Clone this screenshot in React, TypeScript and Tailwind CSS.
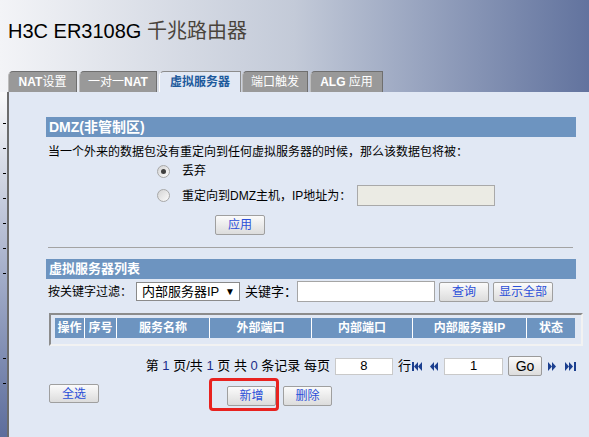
import React from "react";

const btn =
  "flex items-center justify-center border border-[#9f9f9f] bg-gradient-to-b from-[#fbfbfb] to-[#dcdcdc] text-[12px] text-[#2b4fd8] rounded-[2px]";

function Radio({ checked }: { checked?: boolean }) {
  return (
    <span className="w-[13px] h-[13px] rounded-full border border-[#a8a8a8] bg-gradient-to-br from-[#d4d4d4] to-[#fbfbfb] flex items-center justify-center shrink-0">
      {checked && <span className="w-[5px] h-[5px] rounded-full bg-[#3f3f3f]" />}
    </span>
  );
}

function Tab({ w, ml, active, children }: { w: string; ml: string; active?: boolean; children: React.ReactNode }) {
  return (
    <div
      className={
        `${w} ${ml} h-[21px] shrink-0 flex items-center justify-center rounded-tl-[5px] border-t border-r text-[12px] ` +
        (active
          ? "bg-[#e1e8f4] border-[#8c8c8c] border-l border-l-white text-[#1d5a9c] font-bold"
          : "bg-[#999999] border-[#6f6f6f] border-l border-l-[#bdbdbd] text-white")
      }
    >
      {children}
    </div>
  );
}

const tri = "#1b3f8f";

function IconFirst() {
  return (
    <svg width="10" height="9" viewBox="0 0 10 9">
      <rect x="0" y="0" width="2" height="9" fill={tri} />
      <polygon points="6,0 2,4.5 6,9" fill={tri} />
      <polygon points="10,0 6,4.5 10,9" fill={tri} />
    </svg>
  );
}
function IconPrev() {
  return (
    <svg width="8" height="9" viewBox="0 0 8 9">
      <polygon points="4,0 0,4.5 4,9" fill={tri} />
      <polygon points="8,0 4,4.5 8,9" fill={tri} />
    </svg>
  );
}
function IconNext() {
  return (
    <svg width="8" height="9" viewBox="0 0 8 9">
      <polygon points="0,0 4,4.5 0,9" fill={tri} />
      <polygon points="4,0 8,4.5 4,9" fill={tri} />
    </svg>
  );
}
function IconLast() {
  return (
    <svg width="11" height="9" viewBox="0 0 11 9">
      <polygon points="0,0 4,4.5 0,9" fill={tri} />
      <polygon points="4,0 8,4.5 4,9" fill={tri} />
      <rect x="9" y="0" width="2" height="9" fill={tri} />
    </svg>
  );
}

export default function App() {
  const cols: [string, string][] = [
    ["操作", "w-[30px]"],
    ["序号", "w-[32px]"],
    ["服务名称", "w-[93px]"],
    ["外部端口", "w-[102px]"],
    ["内部端口", "w-[101px]"],
    ["内部服务器IP", "w-[114px]"],
    ["状态", "w-[48px]"],
  ];
  const num = "text-[#1c2d8a]";
  return (
    <div className="w-[589px] h-[437px] overflow-hidden flex flex-col font-['Liberation_Sans','Noto_Sans_CJK_SC',sans-serif] text-[12px] text-black">
      {/* header */}
      <div className="h-[92px] shrink-0 flex flex-col bg-gradient-to-r from-[#f3f4f7] via-[#c3cad8] to-[#62739e]">
        <div className="mt-[19px] h-[24px] leading-[24px] pl-[8px] text-[20px]">
          <span className="text-black">H3C ER3108G </span>
          <span className="text-[#4a443c]">千兆路由器</span>
        </div>
        <div className="mt-auto flex items-end pl-[8px]">
          <Tab w="w-[69px]" ml="ml-0">
            <span className="font-bold">NAT</span>设置
          </Tab>
          <Tab w="w-[78px]" ml="ml-[2px]">
            一对一<span className="font-bold">NAT</span>
          </Tab>
          <Tab w="w-[82px]" ml="ml-[2px]" active>
            虚拟服务器
          </Tab>
          <Tab w="w-[66px]" ml="ml-[1px]">
            端口触发
          </Tab>
          <Tab w="w-[73px]" ml="ml-[2px]">
            <span className="font-bold">ALG</span>&nbsp;应用
          </Tab>
        </div>
      </div>

      {/* body */}
      <div className="flex-1 flex min-h-0">
        <div className="w-[7px] shrink-0 bg-gradient-to-b from-[#fafafa] to-[#5d6d9c] flex flex-col pt-[31px] gap-[24px]">
          {[0, 1, 2, 3, 4, 5, 6].map((i) => (
            <div key={i} className="ml-[3px] w-[3px] h-[1px] bg-black" />
          ))}
          <div className="ml-[3px] w-[3px] h-[1px] bg-black mt-[60px]" />
          <div className="ml-[3px] w-[3px] h-[1px] bg-black" />
        </div>
        <div className="w-[2px] shrink-0 bg-[#6c6c6c]" />
        <div className="flex-1 min-w-0 bg-[#e1e8f4] pl-[37px] pr-[13px] flex flex-col">
          {/* DMZ */}
          <div className="mt-[25px] h-[20px] leading-[20px] bg-[#6d94c0] pl-[3px] text-white font-bold text-[14px]">
            DMZ(非管制区)
          </div>
          <div className="mt-[6px] h-[18px] leading-[18px] pl-[2px] whitespace-nowrap">
            当一个外来的数据包没有重定向到任何虚拟服务器的时候，那么该数据包将被：
          </div>
          <div className="h-[20px] flex items-center pl-[111px]">
            <Radio checked />
            <span className="ml-[12px]">丢弃</span>
          </div>
          <div className="mt-[3px] h-[23px] flex items-center pl-[111px]">
            <Radio />
            <span className="ml-[12px] whitespace-nowrap">重定向到DMZ主机，IP地址为：</span>
            <div className="ml-[6px] w-[138px] h-[21px] shrink-0 bg-[#ebebe4] border border-[#a9a9a9]" />
          </div>
          <div className={`mt-[8px] ml-[169px] w-[50px] h-[20px] ${btn}`}>应用</div>
          <div className="mt-[12px] ml-[2px] mr-[3px] h-[1px] bg-[#a3a3a3]" />

          {/* list */}
          <div className="mt-[11px] h-[20px] leading-[20px] bg-[#6d94c0] pl-[3px] text-white font-bold text-[13px]">
            虚拟服务器列表
          </div>
          <div className="mt-[2px] h-[21px] flex items-center pl-[2px] whitespace-nowrap">
            <span className="w-[88px] shrink-0">按关键字过滤：</span>
            <div className="w-[104px] h-[19px] shrink-0 bg-white border border-[#8a8a8a] flex items-center pl-[5px] pr-[4px] text-[13px]">
              <span className="flex-1">内部服务器IP</span>
              <span className="text-[10px]">▼</span>
            </div>
            <span className="ml-[5px] w-[52px] shrink-0 text-[13px]">关键字：</span>
            <div className="w-[138px] h-[21px] shrink-0 bg-white border border-[#a5a5a5]" />
            <div className={`ml-[4px] w-[50px] h-[20px] shrink-0 ${btn}`}>查询</div>
            <div className={`ml-[4px] w-[60px] h-[20px] shrink-0 ${btn}`}>显示全部</div>
          </div>

          {/* table */}
          <div className="mt-[11px] ml-[3px] w-[534px] h-[33px] shrink-0 border-2 border-t-[#8c8c8c] border-l-[#8c8c8c] border-b-[#f2f2f2] border-r-[#f2f2f2] pt-[3px] pl-[4px]">
            <div className="flex h-[20px]">
              {cols.map(([t, w], i) => (
                <div
                  key={t}
                  className={`${w} h-[20px] shrink-0 bg-[#6d94c0] flex items-center justify-center text-white font-bold text-[12px] ${
                    i < cols.length - 1 ? "border-r border-white" : ""
                  }`}
                >
                  {t}
                </div>
              ))}
            </div>
          </div>

          {/* pagination */}
          <div className="mt-[10px] h-[20px] flex items-center justify-end text-[13px] whitespace-nowrap">
            <span>
              第 <span className={num}>1</span> 页/共 <span className={num}>1</span> 页 共{" "}
              <span className={num}>0</span> 条记录 每页
            </span>
            <div className="ml-[5px] w-[58px] h-[17px] shrink-0 bg-white border border-[#c9c9c9] flex items-center justify-center text-[13px]">
              8
            </div>
            <span className="ml-[5px]">行</span>
            <span className="ml-[1px] flex items-center">
              <IconFirst />
            </span>
            <span className="ml-[8px] flex items-center">
              <IconPrev />
            </span>
            <div className="ml-[6px] w-[59px] h-[17px] shrink-0 bg-white border border-[#c9c9c9] flex items-center justify-center text-[13px]">
              1
            </div>
            <div className="ml-[5px] w-[34px] h-[20px] shrink-0 border border-[#9a9a9a] bg-gradient-to-b from-[#fbfbfb] to-[#dcdcdc] flex items-center justify-center text-[14px] rounded-[2px]">
              Go
            </div>
            <span className="ml-[6px] flex items-center">
              <IconNext />
            </span>
            <span className="ml-[9px] flex items-center">
              <IconLast />
            </span>
          </div>

          {/* buttons */}
          <div className="mt-[8px] flex items-start pl-[3px]">
            <div className={`w-[50px] h-[19px] shrink-0 ${btn}`}>全选</div>
            <div className="relative ml-[128px] mt-[2px]">
              <div className={`w-[49px] h-[20px] ${btn}`}>新增</div>
              <div className="absolute left-[-18px] top-[-8px] right-[-3px] bottom-[-5px] border-[3px] border-[#e8221f] rounded-[4px]" />
            </div>
            <div className={`ml-[7px] mt-[2px] w-[49px] h-[20px] shrink-0 ${btn}`}>删除</div>
          </div>
        </div>
      </div>
    </div>
  );
}
